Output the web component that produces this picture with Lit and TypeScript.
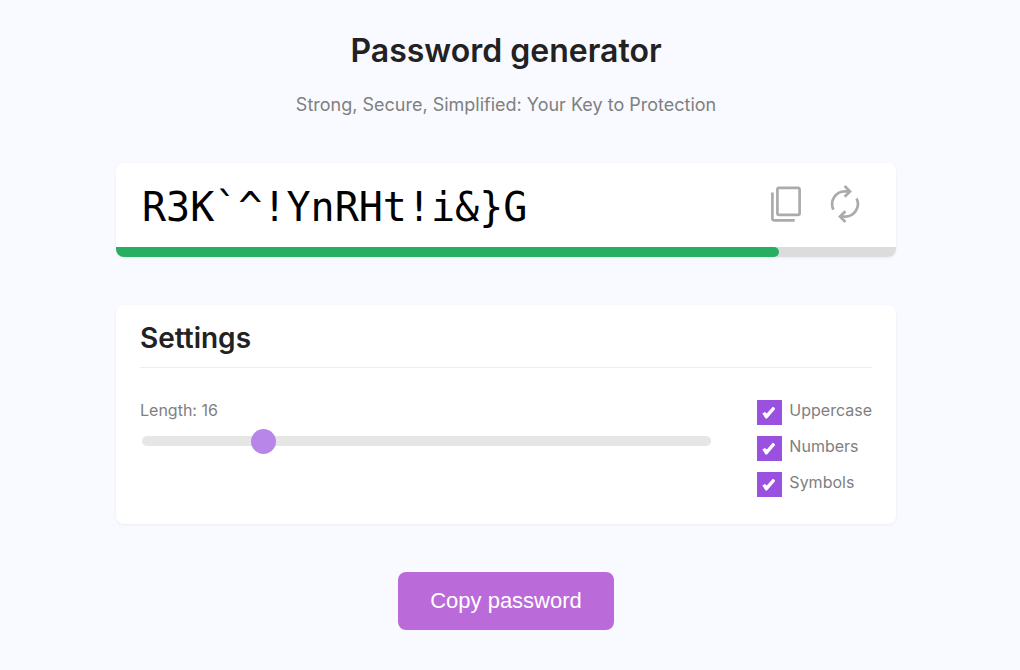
import { LitElement, html, css, svg } from "lit";
import { customElement, state } from "lit/decorators.js";

const copyIcon = svg`
  <svg viewBox="0 0 40 40" width="40" height="40" fill="none" stroke="currentColor" stroke-width="2.7" aria-hidden="true">
    <rect x="13.4" y="3.9" width="22.2" height="27" rx="1.6" />
    <path d="M8.4 8.5V34.3a2 2 0 0 0 2 2H30.7" />
  </svg>`;

const refreshIcon = svg`
  <svg viewBox="0 0 40 40" width="40" height="40" fill="none" stroke="currentColor" stroke-width="2.7" aria-hidden="true">
    <path d="M9.4 25.6A12.7 12.7 0 0 1 21 7.4H26M32.6 14.4A12.7 12.7 0 0 1 21 32.6H16" />
    <path d="M20.6 2L26 7.4L20.6 12.8M21.4 27.2L16 32.6L21.4 38" />
  </svg>`;

@customElement("app-root")
export class AppRoot extends LitElement {
  @state() private password = "R3K`^!YnRHt!i&}G";
  @state() private length = 16;
  @state() private options = { Uppercase: true, Numbers: true, Symbols: true };

  static styles = css`
    :host {
      display: block;
      box-sizing: border-box;
      min-height: 100vh;
      padding: 28px 24px 40px 16px;
      background: #f9faff;
      color: #222;
      font-family: Inter, sans-serif;
      font-size: 16px;
      line-height: 20px;
    }
    *, *::before, *::after { box-sizing: border-box; }
    h1, h2, p { margin: 0; }
    main {
      display: flex;
      flex-direction: column;
      align-items: center;
      gap: 48px;
      max-width: 780px;
      margin: 0 auto;
    }
    header {
      display: flex;
      flex-direction: column;
      gap: 22px;
      text-align: center;
    }
    h1 { font-size: 32px; line-height: 45px; font-weight: 600; }
    .tagline { font-size: 18px; line-height: 20px; color: #808080; }
    .card {
      width: 100%;
      border-radius: 8px;
      background: #fff;
      box-shadow: 0 1px 3px rgba(0, 0, 0, 0.06);
      overflow: hidden;
    }
    .row {
      display: flex;
      align-items: center;
      justify-content: space-between;
      height: 84px;
      padding: 0 32px 2px 26px;
    }
    .password {
      padding-top: 6px;
      color: #000;
      font-family: "DejaVu Sans Mono", monospace;
      font-size: 40px;
      line-height: 48px;
    }
    .actions { display: flex; gap: 20px; }
    .icon {
      display: block;
      width: 40px;
      height: 40px;
      padding: 0;
      border: 0;
      background: none;
      color: #ababab;
      cursor: pointer;
    }
    .icon svg { display: block; }
    .strength { height: 10px; background: #dcdcdc; }
    .level { height: 100%; border-radius: 0 5px 5px 0; background: #27ae60; }
    .settings { padding: 12px 24px 27px; }
    h2 {
      padding-bottom: 8px;
      border-bottom: 1px solid #eee;
      font-size: 28px;
      line-height: 42px;
      font-weight: 600;
    }
    .controls {
      display: flex;
      gap: 44px;
      padding-top: 32px;
      color: #808080;
    }
    .size {
      flex: 1;
      display: flex;
      flex-direction: column;
      gap: 8px;
    }
    .slider {
      appearance: none;
      height: 25px;
      margin: 0 2px;
      background: none;
      cursor: pointer;
    }
    .slider::-webkit-slider-runnable-track {
      height: 10px;
      border-radius: 5px;
      background: #e6e6e6;
    }
    .slider::-webkit-slider-thumb {
      appearance: none;
      width: 25px;
      height: 25px;
      margin-top: -7px;
      border-radius: 50%;
      background: #b885e8;
    }
    .checks { display: flex; flex-direction: column; gap: 11px; }
    .check { display: flex; gap: 7px; height: 25px; cursor: pointer; }
    .box {
      appearance: none;
      display: grid;
      place-items: center;
      width: 25px;
      height: 25px;
      margin: 0;
      padding-right: 2px;
      background: #e6e6e6;
      cursor: pointer;
    }
    .box:checked { background: #9b51e0; }
    .box:checked::before {
      content: "";
      width: 13px;
      height: 12px;
      background: #fff;
      clip-path: polygon(0 58%, 20% 45%, 34% 58%, 82% 0, 100% 18%, 36% 100%, 24% 100%);
    }
    .copy {
      height: 58px;
      padding: 0 32px;
      border: 0;
      border-radius: 8px;
      background: #bb6bd9;
      color: #fff;
      font-family: "Liberation Sans", Arial, sans-serif;
      font-size: 22px;
      cursor: pointer;
    }
  `;

  private generate() {
    let pool = "abcdefghijklmnopqrstuvwxyz";
    if (this.options.Uppercase) pool += "ABCDEFGHIJKLMNOPQRSTUVWXYZ";
    if (this.options.Numbers) pool += "0123456789";
    if (this.options.Symbols) pool += "!@#$%^&*()`{}[]";
    this.password = Array.from({ length: this.length }, () => pool[Math.floor(Math.random() * pool.length)]).join("");
  }

  private copy() {
    navigator.clipboard?.writeText(this.password);
  }

  private resize(e: Event) {
    this.length = Number((e.target as HTMLInputElement).value);
    this.generate();
  }

  private toggle(name: string, e: Event) {
    this.options = { ...this.options, [name]: (e.target as HTMLInputElement).checked };
    this.generate();
  }

  render() {
    const level = Math.min(100, 53 + this.length * 2);
    return html`
      <main>
        <header>
          <h1>Password generator</h1>
          <p class="tagline">Strong, Secure, Simplified: Your Key to Protection</p>
        </header>
        <section class="card">
          <div class="row">
            <output class="password">${this.password}</output>
            <div class="actions">
              <button class="icon" aria-label="Copy" @click=${this.copy}>${copyIcon}</button>
              <button class="icon" aria-label="Regenerate" @click=${this.generate}>${refreshIcon}</button>
            </div>
          </div>
          <div class="strength"><div class="level" style="width:${level}%"></div></div>
        </section>
        <section class="card settings">
          <h2>Settings</h2>
          <div class="controls">
            <div class="size">
              <label for="length">Length: ${this.length}</label>
              <input class="slider" id="length" type="range" min="4" max="64" .value=${String(this.length)} @input=${this.resize} />
            </div>
            <div class="checks">
              ${Object.entries(this.options).map(([name, on]) => html`
                <label class="check">
                  <input class="box" type="checkbox" .checked=${on} @change=${(e: Event) => this.toggle(name, e)} />
                  <span>${name}</span>
                </label>`)}
            </div>
          </div>
        </section>
        <button class="copy" @click=${this.copy}>Copy password</button>
      </main>
    `;
  }
}
